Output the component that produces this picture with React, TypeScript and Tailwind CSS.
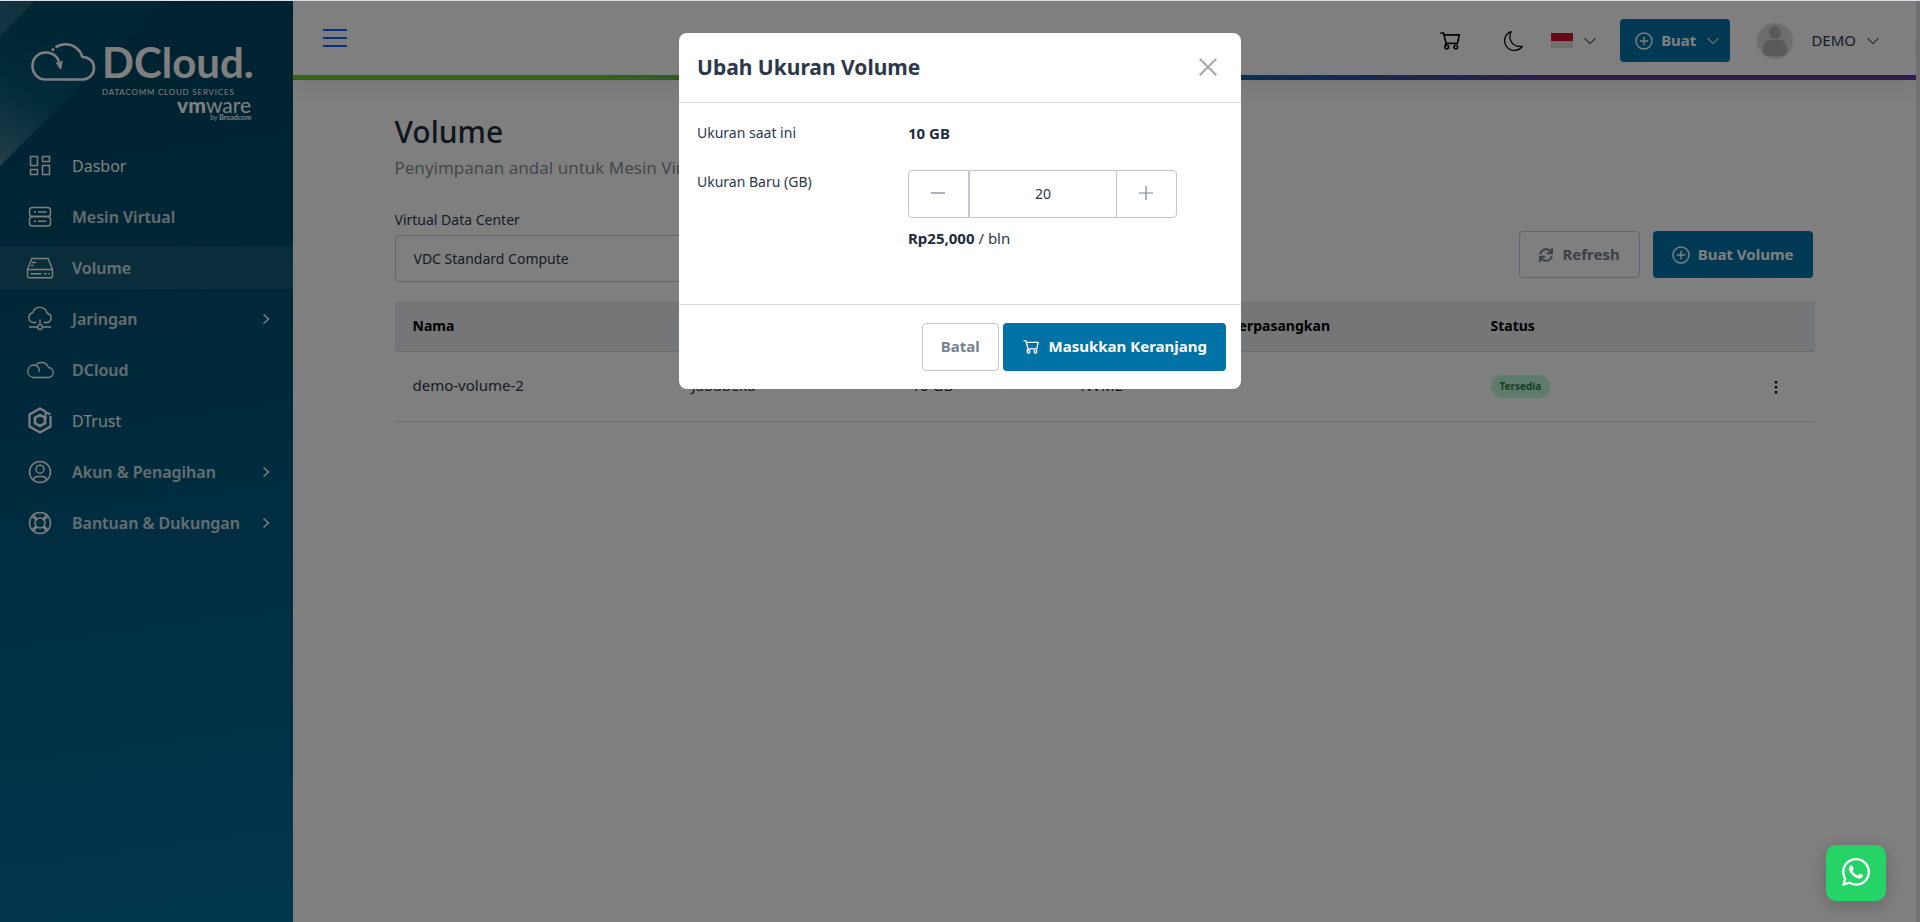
import { useState } from "react";
import type { ReactNode } from "react";
import { BsChevronDown, BsMoon } from "react-icons/bs";
import { FaSync, FaWhatsapp } from "react-icons/fa";

type MenuItem = {
  label: string;
  icon: ReactNode;
  bold?: boolean;
  active?: boolean;
  children?: boolean;
};

const CartIcon = ({ className }: { className?: string }) => (
  <svg viewBox="0 0 20 18" fill="none" stroke="currentColor" strokeWidth="1.6" className={className}>
    <path d="M.3 1h3.2l2.6 10.4h11.3L19.3 2.9H4.1" />
    <path d="M6.1 11.4 5 14" />
    <circle cx="6.8" cy="15" r="1.8" />
    <circle cx="15.8" cy="15" r="1.8" />
  </svg>
);

const PlusCircleIcon = ({ className }: { className?: string }) => (
  <svg viewBox="0 0 18 18" fill="none" stroke="currentColor" strokeWidth="1.4" className={className}>
    <circle cx="9" cy="9" r="8" />
    <path d="M9 4.8v8.4M4.8 9h8.4" />
  </svg>
);

const DashboardIcon = () => (
  <svg viewBox="0 0 22 22" fill="none" stroke="currentColor" strokeWidth="1.5" className="size-[22px]">
    <path d="M1.5 1.5h7v9h-7zM13.5 1.5h7v5h-7zM1.5 14.5h7v5h-7zM13.5 10.5h7v9h-7z" />
  </svg>
);

const ServerIcon = () => (
  <svg viewBox="0 0 24 22" fill="none" stroke="currentColor" strokeWidth="1.5" className="h-[22px] w-6">
    <rect x="1.5" y="1.5" width="21" height="9" rx="3" />
    <rect x="1.5" y="10.5" width="21" height="9.5" rx="3" />
    <path d="M6 6h2M10 6h8.5M6 15.2h2M10 15.2h8.5" strokeWidth="1.6" />
  </svg>
);

const DriveIcon = () => (
  <svg viewBox="0 0 28 22" fill="none" stroke="currentColor" strokeWidth="1.4" className="h-[22px] w-7">
    <path d="M1.5 12.5 5.8 1.5h16.4l4.3 11v6.5a1.8 1.8 0 0 1-1.8 1.8H3.3A1.8 1.8 0 0 1 1.5 19zM1.5 12.5h25" />
    <path d="M6 5.5h4M5 8.5h2.500M4.500 16.800h11M18 16.800h2.500M22.500 16.800h1.500" />
  </svg>
);

const NetworkIcon = () => (
  <svg viewBox="0 0 26 25" fill="none" stroke="currentColor" strokeWidth="1.4" className="h-[25px] w-[26px]">
    <path d="M9.5 16.5H6A5 5 0 0 1 5.8 6.7 7.3 7.3 0 0 1 20 7.3a4.7 4.7 0 0 1 .5 9.2h-4" />
    <path d="M13 13.5v5M2 21h8.5M15.5 21H24" />
    <circle cx="13" cy="21" r="2.4" />
  </svg>
);

const CloudIcon = () => (
  <svg viewBox="0 0 28 18" fill="none" stroke="currentColor" strokeWidth="1.3" className="h-[18px] w-7">
    <path d="M13 11c1-4-1.500-7-5.500-7A6.500 6.300 0 0 0 7.500 16.500H22a5 5 0 0 0 .5-10C21 3 18 1.300 15 1.500c-2 .1-3.500.9-4.600 2" />
  </svg>
);

const TrustIcon = () => (
  <svg viewBox="0 0 24 27" fill="none" stroke="currentColor" className="h-[27px] w-6">
    <path d="M17.5 4.500 12 1.500 1.500 7.500v12L12 25.500l10.500-6V9" strokeWidth="2.2" />
    <path d="M12 8 7 10.700v5.600L12 19l5-2.700v-5.600z" strokeWidth="2.6" />
    <path d="M17.500 12V5l5 2.500" strokeWidth="2" />
  </svg>
);

const UserIcon = () => (
  <svg viewBox="0 0 24 24" fill="none" stroke="currentColor" strokeWidth="1.5" className="size-6">
    <circle cx="12" cy="12" r="10.5" />
    <circle cx="12" cy="9.2" r="4" />
    <path d="M5.5 20c.6-2.500 2-3.500 4-3.500h5c2 0 3.400 1 4 3.500" />
  </svg>
);

const LifeRingIcon = () => (
  <svg viewBox="0 0 24 24" fill="none" stroke="currentColor" strokeWidth="1.5" className="size-6">
    <circle cx="12" cy="12" r="10.5" />
    <circle cx="12" cy="12" r="5" />
    <path d="m4 5.500 4 3.200M5.500 4l3.200 4M20 5.500l-4 3.200M18.500 4l-3.200 4M4 18.500l4-3.200M5.500 20l3.200-4M20 18.500l-4-3.200M18.500 20l-3.200-4" />
  </svg>
);

const menu: MenuItem[] = [
  { label: "Dasbor", icon: <DashboardIcon /> },
  { label: "Mesin Virtual", icon: <ServerIcon />, bold: true },
  { label: "Volume", icon: <DriveIcon />, bold: true, active: true },
  { label: "Jaringan", icon: <NetworkIcon />, bold: true, children: true },
  { label: "DCloud", icon: <CloudIcon />, bold: true },
  { label: "DTrust", icon: <TrustIcon /> },
  { label: "Akun & Penagihan", icon: <UserIcon />, bold: true, children: true },
  { label: "Bantuan & Dukungan", icon: <LifeRingIcon />, bold: true, children: true },
];

const Logo = () => (
  <div className="relative flex h-[143px] gap-1.5 pl-[30px] pt-9 font-['Lato',sans-serif] text-white">
    <svg viewBox="0 0 66 42" fill="none" stroke="currentColor" strokeWidth="2.6" className="mt-1 h-[42px] w-[66px] shrink-0">
      <path d="M30 27c0-9-5-15.500-14.500-15.500C8 11.500 2.500 17.500 2.500 25S8 38.500 15.500 38.500H53c6 0 11-5 11-11.500S59 16 52.500 16C50 8.500 43.500 3.300 36 3.300c-4 0-7.500 1-10.500 3" />
      <path d="m26.500 21.500 4 5.500 1.500-7" strokeWidth="1.6" />
      <circle cx="23" cy="8.5" r="1.5" fill="currentColor" stroke="none" />
    </svg>
    <div className="flex w-[149px] flex-col">
      <span className="text-[42px] font-bold leading-[50px]">DCloud.</span>
      <span className="whitespace-nowrap text-[8px] leading-[10px] tracking-widest">DATACOMM CLOUD SERVICES</span>
      <span className="text-right text-[21px] leading-4">
        <b className="font-black">vm</b>ware
      </span>
      <span className="text-right text-[7px] leading-[9px]">
        by <b>Broadcom</b>
      </span>
    </div>
  </div>
);

const Sidebar = () => (
  <aside className="relative w-[293px] shrink-0 bg-[linear-gradient(172deg,#004460_0%,#004c6a_25%,#006e9e_100%)]">
    {/* Corner decoration */}
    <svg viewBox="0 0 165 165" className="absolute left-0 top-0 size-[165px]">
      <defs>
        <linearGradient id="corner" x1="0" y1="1" x2="0.5" y2="0.2">
          <stop offset="0" stopColor="#ffffff" stopOpacity="0.3" />
          <stop offset="0.5" stopColor="#1490b0" stopOpacity="0.22" />
          <stop offset="1" stopColor="#0a6f90" stopOpacity="0.15" />
        </linearGradient>
      </defs>
      <path d="M0 0h165L0 165z" fill="url(#corner)" />
      <path d="M0 0h35L0 35z" fill="#ffffff" fillOpacity="0.14" />
    </svg>
    <Logo />
    <nav className="relative flex flex-col gap-2">
      {menu.map((item) => (
        <a
          key={item.label}
          href="#"
          className={`flex h-[43px] items-center pr-[23px] text-white ${item.active ? "bg-white/8" : ""}`}
        >
          <span className="flex w-[72px] justify-center pl-2">{item.icon}</span>
          <span className={`flex-1 text-base ${item.bold ? "font-semibold text-white/80" : "text-white"}`}>
            {item.label}
          </span>
          {item.children && (
            <svg viewBox="0 0 8 12" fill="none" stroke="currentColor" strokeWidth="1.5" className="h-3 w-2">
              <path d="m1.500 1.500 5 4.500-5 4.500" />
            </svg>
          )}
        </a>
      ))}
    </nav>
  </aside>
);

const Header = () => (
  <header className="shadow-[0_8px_24px_rgba(0,0,0,0.08)]">
    <div className="flex h-[74px] items-center justify-between pl-[30px] pr-9">
      <button type="button" aria-label="Menu" className="text-[#1465ff]">
        <svg viewBox="0 0 24 18" fill="none" stroke="currentColor" strokeWidth="2" className="h-[18px] w-6">
          <path d="M0 1h24M0 9h24M0 17h24" />
        </svg>
      </button>
      <div className="flex items-center pt-[5px] text-[#2c384a]">
        <button type="button" aria-label="Keranjang" className="mr-11 text-black">
          <CartIcon className="h-[18px] w-5" />
        </button>
        <button type="button" aria-label="Mode gelap" className="mr-[27px] text-black">
          <BsMoon className="size-5" />
        </button>
        <button type="button" aria-label="Bahasa" className="mr-[23px] flex items-center gap-2.5">
          <span className="flex h-[15px] w-[22px] flex-col">
            <span className="h-2 bg-[#d0142c]" />
            <span className="flex-1 bg-[#e6dede]" />
          </span>
          <BsChevronDown className="size-3.5" />
        </button>
        <button
          type="button"
          className="mr-[27px] flex h-[43px] items-center rounded bg-[#0072a6] pl-[15px] pr-2.5 text-[15px] font-bold text-white"
        >
          <PlusCircleIcon className="mr-2 size-[18px]" />
          Buat
          <BsChevronDown className="ml-2.5 size-3.5" />
        </button>
        <button type="button" className="flex items-center text-[15px]">
          <svg viewBox="0 0 36 36" className="mr-[18px] size-9">
            <circle cx="18" cy="18" r="18" fill="#dadada" />
            <ellipse cx="18" cy="9.5" rx="6" ry="6.5" fill="#b4b4b4" />
            <path d="M6 27c0-6 3-10 7-10h10c4 0 7 4 7 10 0 4-3 6-6 6H12c-3 0-6-2-6-6z" fill="#b4b4b4" />
          </svg>
          DEMO
          <BsChevronDown className="ml-2.5 size-3.5" />
        </button>
      </div>
    </div>
    <div className="h-[5px] bg-[linear-gradient(90deg,#6cc62c_0%,#6cc62c_19%,#10649f_56%,#5c3aa8_78%)]" />
  </header>
);

const VolumePage = () => (
  <main className="mx-auto w-full max-w-[1420px] pt-8">
    <h1 className="text-3xl font-medium leading-10 text-[#232c3c]">Volume</h1>
    <p className="text-[17px] leading-8 text-[#8a9099]">Penyimpanan andal untuk Mesin Virtual Anda</p>

    <div className="mt-[26px] flex items-end justify-between">
      <div className="flex flex-col gap-[5px]">
        <label htmlFor="vdc" className="leading-5">
          Virtual Data Center
        </label>
        <select id="vdc" className="h-[47px] w-[420px] appearance-none rounded border border-[#c6c2d8] px-[18px]">
          <option>VDC Standard Compute</option>
        </select>
      </div>
      <div className="mb-1 mr-0.5 flex gap-[13px] text-[15px] font-bold">
        <button
          type="button"
          className="flex h-[47px] items-center gap-2.5 rounded border border-[#c6c2d8] px-[19px] text-[#768192]"
        >
          <FaSync className="size-3.5" />
          Refresh
        </button>
        <button type="button" className="flex h-[47px] items-center gap-2 rounded bg-[#0072a6] px-[19px] text-white">
          <PlusCircleIcon className="size-[18px]" />
          Buat Volume
        </button>
      </div>
    </div>

    <table className="mt-[19px] w-full table-fixed text-left">
      <thead>
        <tr className="h-[50px] border-b border-[#d8dbe0] bg-[#eaecf0] text-black">
          <th className="w-[279px] px-[18px] font-bold">Nama</th>
          <th className="w-[220px] px-[18px] font-bold">Lokasi</th>
          <th className="w-[169px] px-[18px] font-bold">Ukuran</th>
          <th className="w-[151px] px-[18px] font-bold">Tipe</th>
          <th className="w-[259px] px-[18px] font-bold">Terpasangkan</th>
          <th className="w-[264px] px-[18px] font-bold">Status</th>
          <th aria-label="Aksi" />
        </tr>
      </thead>
      <tbody className="text-[15px]">
        <tr className="h-[70px] border-b border-[#d8dbe0]">
          <td className="px-[18px]">demo-volume-2</td>
          <td className="px-[18px]">Jababeka</td>
          <td className="px-[18px]">10 GB</td>
          <td className="px-[18px]">NVME</td>
          <td className="px-[18px]" />
          <td className="px-[18px]">
            <span className="inline-block rounded-full bg-[#baf8d8] px-[9px] align-middle text-[10px] font-bold leading-[23px] text-[#347a48]">
              Tersedia
            </span>
          </td>
          <td className="text-center text-black">
            <button type="button" aria-label="Opsi" className="align-middle">
              <svg viewBox="0 0 4 14" fill="currentColor" className="h-3.5 w-1">
                <path d="M.8 1h2.400v2.400H.8zM.8 6h2.400v2.400H.8zM.8 11h2.400v2.400H.8z" />
              </svg>
            </button>
          </td>
        </tr>
      </tbody>
    </table>
  </main>
);

const ResizeModal = () => {
  const [size, setSize] = useState(20);

  return (
    <div
      role="dialog"
      aria-labelledby="resize-title"
      className="w-[562px] rounded-lg bg-white text-[#2c384a]"
    >
      <div className="flex h-[70px] items-center justify-between border-b border-[#d8dbe4] pb-0.5 pl-[18px] pr-6">
        <h2 id="resize-title" className="text-[21px] font-bold leading-8">
          Ubah Ukuran Volume
        </h2>
        <button type="button" aria-label="Tutup" className="text-[#a8a8a8]">
          <svg viewBox="0 0 18 18" fill="none" stroke="currentColor" strokeWidth="2" className="size-[18px]">
            <path d="m.7.7 16.600 16.600M17.300.7.7 17.300" />
          </svg>
        </button>
      </div>

      <div className="grid h-[202px] grid-cols-[211px_269px] content-start border-b border-[#d8dbe4] px-[18px] pt-5">
        <span className="leading-5">Ukuran saat ini</span>
        <span className="pb-[27px] text-[15px] font-bold leading-5 text-[#232c3c]">10 GB</span>
        <label htmlFor="new-size" className="pt-0.5 leading-5">
          Ukuran Baru (GB)
        </label>
        <div>
          <div className="flex h-12 text-[#768192]">
            <button
              type="button"
              aria-label="Kurangi"
              onClick={() => setSize(size - 1)}
              className="flex w-[61px] items-center justify-center rounded-l border border-[#c6c2d8] pb-0.5 pr-0.5"
            >
              <svg viewBox="0 0 14 14" stroke="currentColor" strokeWidth="1.2" className="size-3.5">
                <path d="M0 7h14" />
              </svg>
            </button>
            <input
              id="new-size"
              type="text"
              inputMode="numeric"
              value={size}
              onChange={(e) => setSize(Number(e.target.value) || 0)}
              className="w-0 flex-1 border border-r-0 border-[#c6c2d8] text-center text-[#2c384a]"
            />
            <button
              type="button"
              aria-label="Tambah"
              onClick={() => setSize(size + 1)}
              className="flex w-[61px] items-center justify-center rounded-r border border-[#c6c2d8] pb-0.5 pr-0.5"
            >
              <svg viewBox="0 0 14 14" stroke="currentColor" strokeWidth="1.2" className="size-3.5">
                <path d="M0 7h14M7 0v14" />
              </svg>
            </button>
          </div>
          <p className="pt-2.5 text-[15px] leading-5">
            <b className="text-[#232c3c]">Rp25,000</b> / bln
          </p>
        </div>
      </div>

      <div className="flex items-center justify-end gap-1 pb-[18px] pl-4 pr-[15px] pt-[18px] text-[15px] font-bold">
        <button type="button" className="h-12 rounded border border-[#c6c2d8] px-[18px] text-[#768192]">
          Batal
        </button>
        <button type="button" className="flex h-12 items-center gap-2.5 rounded bg-[#0072a6] pl-5 pr-[19px] text-white">
          <CartIcon className="h-3.5 w-4" />
          Masukkan Keranjang
        </button>
      </div>
    </div>
  );
};

export default function App() {
  return (
    <div className="flex min-h-screen flex-col border-t border-[#dfe1ec] bg-white font-['Noto_Sans','Open_Sans',sans-serif] text-sm text-[#2c384a]">
      <div className="flex flex-1 border-r-4 border-[#e6e6ea]">
        <Sidebar />
        <div className="min-w-0 flex-1">
          <Header />
          <VolumePage />
        </div>
      </div>

      {/* Backdrop and dialog */}
      <div className="fixed inset-x-0 bottom-0 top-px flex items-start justify-center bg-black/50 pt-8">
        <ResizeModal />
      </div>

      <a
        href="#"
        aria-label="WhatsApp"
        className="fixed bottom-[21px] right-[34px] flex h-14 w-[60px] items-center justify-center rounded-[10px] bg-[#25d366] pb-0.5 text-white shadow-[0_4px_16px_rgba(0,0,0,0.2)]"
      >
        <FaWhatsapp className="size-8" />
      </a>
    </div>
  );
}
